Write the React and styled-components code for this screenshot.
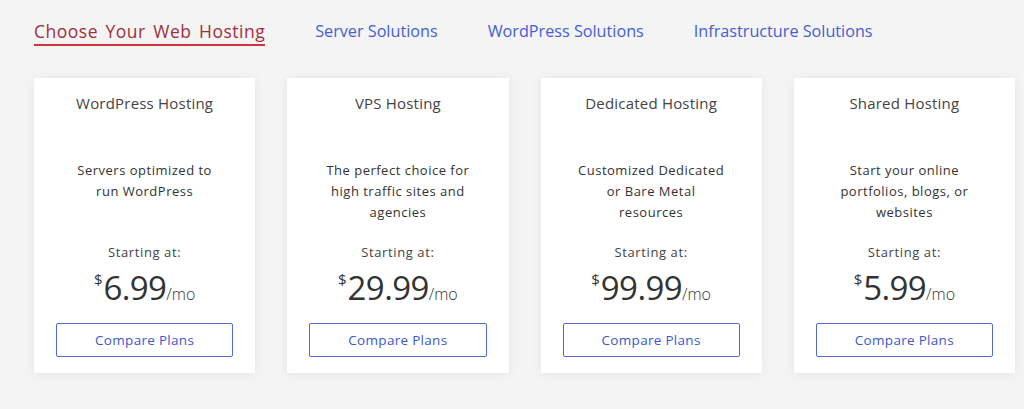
import React from "react";
import styled, { createGlobalStyle } from "styled-components";

const Global = createGlobalStyle`
  html, body { margin: 0; padding: 0; background: #f4f4f4; }
  body { font-family: "Open Sans", "Liberation Sans", sans-serif; -webkit-font-smoothing: antialiased; }
`;

const Page = styled.div`
  width: 1024px;
  height: 409px;
  background: #f4f4f4;
  box-sizing: border-box;
  padding: 18px 9px 0 34px;
  overflow: hidden;
`;

const Tabs = styled.nav`
  display: flex;
  gap: 50px;
`;

const Tab = styled.a`
  font-family: "Open Sans", sans-serif;
  font-size: ${(p) => (p.$active ? "17.5px" : "16.2px")};
  line-height: 26px;
  letter-spacing: ${(p) => (p.$active ? "0.5px" : "0")};
  word-spacing: ${(p) => (p.$active ? "2.5px" : "0")};
  color: ${(p) => (p.$active ? "#a1303a" : "#4360d3")};
  border-bottom: 2px solid ${(p) => (p.$active ? "#d0343c" : "transparent")};
  text-decoration: none;
  white-space: nowrap;
  cursor: pointer;
`;

const Grid = styled.div`
  margin-top: 32px;
  display: grid;
  grid-template-columns: repeat(4, 1fr);
  gap: 32px;
`;

const Card = styled.div`
  background: #fff;
  box-shadow: 0 1px 10px rgba(0, 0, 0, 0.07);
  padding: 14px 22px 16px;
  display: flex;
  flex-direction: column;
  align-items: stretch;
  text-align: center;
`;

const Title = styled.h3`
  margin: 0;
  font-family: "Open Sans", sans-serif;
  font-weight: 400;
  font-size: 15px;
  line-height: 22px;
  letter-spacing: 0.2px;
  color: #444;
`;

const Desc = styled.p`
  margin: 46px 0 0;
  min-height: 63px;
  font-family: "Open Sans", sans-serif;
  font-weight: 500;
  font-size: 13px;
  line-height: 21px;
  letter-spacing: 0.5px;
  color: #333;
`;

const Starting = styled.div`
  margin-top: 19px;
  font-family: "Open Sans", sans-serif;
  font-weight: 500;
  font-size: 13px;
  line-height: 20px;
  letter-spacing: 0.6px;
  color: #444;
`;

const Price = styled.div`
  margin-top: 6px;
  height: 40px;
  display: flex;
  justify-content: center;
  align-items: baseline;
  color: #333;
  font-family: "Open Sans", sans-serif;
  font-weight: 400;
`;

const Currency = styled.span`
  font-size: 15px;
  align-self: flex-start;
  margin-top: 1px;
  margin-right: 1px;
`;

const Amount = styled.span`
  font-size: 33px;
  line-height: 40px;
  letter-spacing: -0.6px;
`;

const Per = styled.span`
  font-size: 16px;
  font-weight: 300;
`;

const Button = styled.button`
  margin-top: 15px;
  height: 34px;
  border: 1px solid #5168d6;
  border-radius: 2px;
  background: #fff;
  color: #3c58cf;
  font-family: "Open Sans", sans-serif;
  font-weight: 500;
  font-size: 13.5px;
  letter-spacing: 0.3px;
  cursor: pointer;
`;

const plans = [
  { title: "WordPress Hosting", lines: ["Servers optimized to", "run WordPress"], price: "6.99" },
  { title: "VPS Hosting", lines: ["The perfect choice for", "high traffic sites and", "agencies"], price: "29.99" },
  { title: "Dedicated Hosting", lines: ["Customized Dedicated", "or Bare Metal", "resources"], price: "99.99" },
  { title: "Shared Hosting", lines: ["Start your online", "portfolios, blogs, or", "websites"], price: "5.99" },
];

export default function App() {
  return (
    <>
      <Global />
      <Page>
        <Tabs>
          <Tab $active>Choose Your Web Hosting</Tab>
          <Tab>Server Solutions</Tab>
          <Tab>WordPress Solutions</Tab>
          <Tab>Infrastructure Solutions</Tab>
        </Tabs>
        <Grid>
          {plans.map((p) => (
            <Card key={p.title}>
              <Title>{p.title}</Title>
              <Desc>
                {p.lines.map((l, i) => (
                  <React.Fragment key={i}>
                    {l}
                    {i < p.lines.length - 1 && <br />}
                  </React.Fragment>
                ))}
              </Desc>
              <Starting>Starting at:</Starting>
              <Price>
                <Currency>$</Currency>
                <Amount>{p.price}</Amount>
                <Per>/mo</Per>
              </Price>
              <Button>Compare Plans</Button>
            </Card>
          ))}
        </Grid>
      </Page>
    </>
  );
}
